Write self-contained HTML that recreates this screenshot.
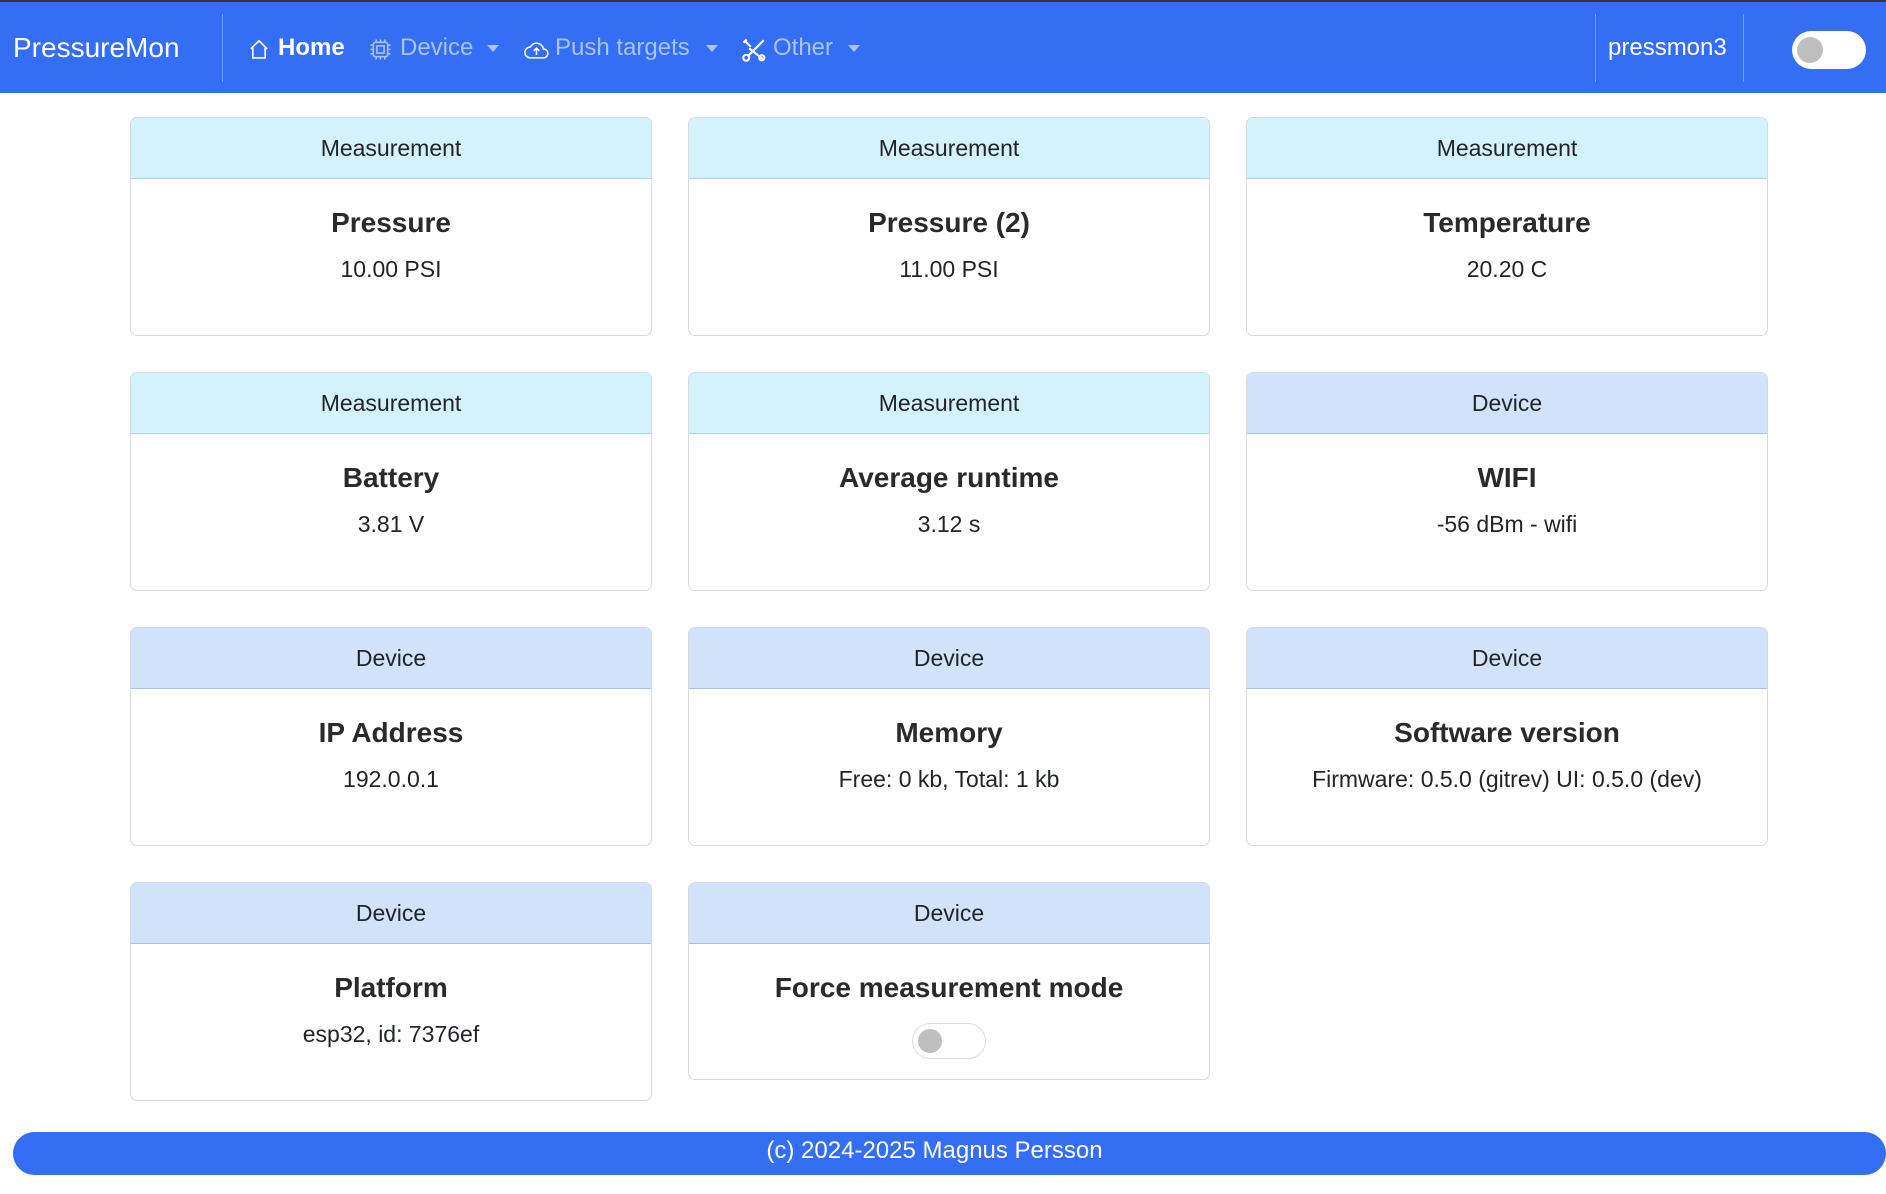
<!DOCTYPE html>
<html><head><meta charset="utf-8"><style>
*{box-sizing:border-box;margin:0;padding:0}
body{width:1886px;height:1194px;background:#fff;font-family:"Liberation Sans",sans-serif;color:#212529;position:relative;overflow:hidden}
.nav{position:absolute;left:0;top:0;width:1886px;height:93px;background:#336ef5;border-top:2px solid #333}
.nav .t{position:absolute;top:0;height:91px;line-height:91px;font-size:24px;color:#a9c3fb;white-space:nowrap}
.sep{position:absolute;top:12px;width:1px;height:68px;background:#6e97f7}
.ic{position:absolute;top:36px}
.caret{position:absolute;top:43px;width:0;height:0;border-left:6px solid transparent;border-right:6px solid transparent;border-top:7px solid #a9c3fb}
.card{position:absolute;width:522px;border:1px solid #d8dadd;border-radius:7px;overflow:hidden;text-align:center;background:#fff}
.hd{height:61px;line-height:60px;font-size:23px;border-bottom:1px solid #b4cbd4}
.m .hd{background:#d4f2fb;border-bottom-color:#b2d2dc}
.d .hd{background:#d3e2fb;border-bottom-color:#acc0e0}
.ti{font-size:28px;font-weight:bold;margin-top:26px;line-height:36px;color:#2a2a2a}
.va{font-size:23px;margin-top:13px;line-height:30px}
.tg{display:inline-block;width:74px;height:36px;border:1px solid #ddd;border-radius:18px;position:relative;margin-top:17px}
.tg::after{content:"";position:absolute;left:5px;top:5px;width:24px;height:24px;border-radius:50%;background:#bfbfbf}
.foot{position:absolute;left:13px;top:1132px;width:1873px;height:43px;background:#336ef5;border-radius:22px;color:#fff;font-size:24px;line-height:38px;text-align:center;padding-right:30px}
</style></head><body>
<div class="nav">
<div class="t" style="left:13px;color:#fff;font-size:28px">PressureMon</div>
<div class="sep" style="left:222px"></div>
<svg class="ic" style="left:248px" width="22" height="22" viewBox="0 0 16 16" fill="none" stroke="#fff" stroke-width="1.2"><path d="M2 8 L8 2 L14 8 M3.5 6.5 V14.5 H12.5 V6.5"/></svg>
<div class="t" style="left:278px;color:#fff;font-weight:bold">Home</div>
<svg class="ic" style="left:369px" width="23" height="23" viewBox="0 0 16 16" fill="none" stroke="#a9c3fb" stroke-width="1.1"><rect x="3" y="3" width="10" height="10" rx="1.5"/><rect x="5.5" y="5.5" width="5" height="5"/><path d="M5 1v2M8 1v2M11 1v2M5 13v2M8 13v2M11 13v2M1 5h2M1 8h2M1 11h2M13 5h2M13 8h2M13 11h2"/></svg>
<div class="t" style="left:400px">Device</div><div class="caret" style="left:487px"></div>
<svg class="ic" style="left:524px;top:37px" width="25" height="21" viewBox="0 0 18 14" fill="none" stroke="#fff" stroke-width="1.1"><path d="M4.5 13 H14 A3.2 3.2 0 0 0 14 6.6 A5 5 0 0 0 4.6 5.2 A3.9 3.9 0 0 0 4.5 13 Z"/><path d="M9 11 V6 M7 8 L9 6 L11 8"/></svg>
<div class="t" style="left:555px">Push targets</div><div class="caret" style="left:706px"></div>
<svg class="ic" style="left:741px;top:35px" width="26" height="26" viewBox="0 0 16 16" fill="none" stroke="#fff" stroke-width="1.3"><path d="M2 2 L6 6 M1.5 3.5 L3.5 1.5 M5 7 L14 14 M14 2 L4 12"/><circle cx="3.2" cy="12.8" r="1.8"/><circle cx="12.8" cy="12.8" r="1.6"/></svg>
<div class="t" style="left:773px">Other</div><div class="caret" style="left:848px"></div>
<div class="sep" style="left:1595px"></div>
<div class="t" style="left:1608px;color:#fff">pressmon3</div>
<div class="sep" style="left:1743px"></div>
<div style="position:absolute;left:1792px;top:29px;width:74px;height:38px;background:#fff;border-radius:19px"><div style="position:absolute;left:5px;top:6px;width:26px;height:26px;border-radius:50%;background:#bfbfbf"></div></div>
</div>

<div class="card m" style="left:130px;top:117px;height:219px"><div class="hd">Measurement</div><div class="ti">Pressure</div><div class="va">10.00 PSI</div></div>
<div class="card m" style="left:688px;top:117px;height:219px"><div class="hd">Measurement</div><div class="ti">Pressure (2)</div><div class="va">11.00 PSI</div></div>
<div class="card m" style="left:1246px;top:117px;height:219px"><div class="hd">Measurement</div><div class="ti">Temperature</div><div class="va">20.20 C</div></div>

<div class="card m" style="left:130px;top:372px;height:219px"><div class="hd">Measurement</div><div class="ti">Battery</div><div class="va">3.81 V</div></div>
<div class="card m" style="left:688px;top:372px;height:219px"><div class="hd">Measurement</div><div class="ti">Average runtime</div><div class="va">3.12 s</div></div>
<div class="card d" style="left:1246px;top:372px;height:219px"><div class="hd">Device</div><div class="ti">WIFI</div><div class="va">-56 dBm - wifi</div></div>

<div class="card d" style="left:130px;top:627px;height:219px"><div class="hd">Device</div><div class="ti">IP Address</div><div class="va">192.0.0.1</div></div>
<div class="card d" style="left:688px;top:627px;height:219px"><div class="hd">Device</div><div class="ti">Memory</div><div class="va">Free: 0 kb, Total: 1 kb</div></div>
<div class="card d" style="left:1246px;top:627px;height:219px"><div class="hd">Device</div><div class="ti">Software version</div><div class="va">Firmware: 0.5.0 (gitrev) UI: 0.5.0 (dev)</div></div>

<div class="card d" style="left:130px;top:882px;height:219px"><div class="hd">Device</div><div class="ti">Platform</div><div class="va">esp32, id: 7376ef</div></div>
<div class="card d" style="left:688px;top:882px;height:198px"><div class="hd">Device</div><div class="ti">Force measurement mode</div><div class="tg"></div></div>

<div class="foot">(c) 2024-2025 Magnus Persson</div>
</body></html>
